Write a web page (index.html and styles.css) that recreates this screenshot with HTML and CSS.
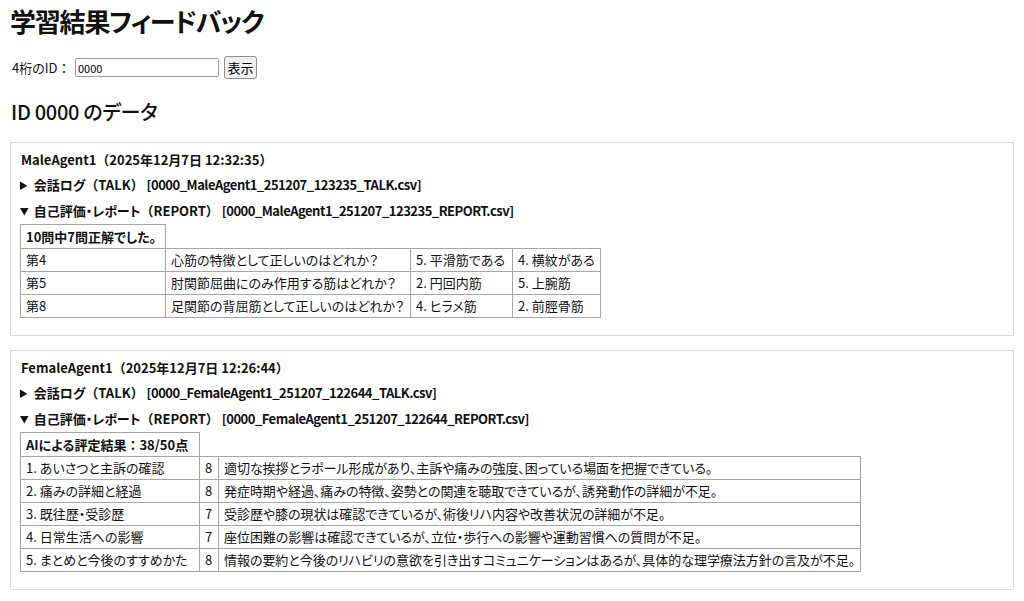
FILE: index.html
```html
<!DOCTYPE html>
<html lang="ja">
<head>
<meta charset="utf-8">
<title>学習結果フィードバック</title>
<link rel="stylesheet" href="styles.css">
</head>
<body>
<h1 class="title">学習結果フィードバック</h1>
<div class="form-row">
  <label class="id-label" for="id">4桁のID<span class="wide">：</span></label>
  <input class="id-input" id="id" type="text" value="0000">
  <button class="show-btn" type="button">表示</button>
</div>
<h2 class="data-title">ID 0000 のデータ</h2>

<section class="card">
  <div class="agent">MaleAgent1<span class="wide">（</span>2025年12月7日 12:32:35<span class="wide">）</span></div>
  <details class="log">
    <summary>会話ログ<span class="wide">（</span>TALK<span class="wide">）</span> <span class="file">[0000_MaleAgent1_251207_123235_TALK.csv]</span></summary>
  </details>
  <details class="log" open>
    <summary>自己評価・レポート<span class="wide">（</span>REPORT<span class="wide">）</span> <span class="file">[0000_MaleAgent1_251207_123235_REPORT.csv]</span></summary>
    <table class="report quiz">
      <tr><th class="q-head">10問中7問正解でした。</th></tr>
      <tr><td class="c1">第4</td><td class="c2">心筋の特徴として正しいのはどれか？</td><td class="c3">5. 平滑筋である</td><td class="c4">4. 横紋がある</td></tr>
      <tr><td class="c1">第5</td><td class="c2">肘関節屈曲にのみ作用する筋はどれか？</td><td class="c3">2. 円回内筋</td><td class="c4">5. 上腕筋</td></tr>
      <tr><td class="c1">第8</td><td class="c2">足関節の背屈筋として正しいのはどれか？</td><td class="c3">4. ヒラメ筋</td><td class="c4">2. 前脛骨筋</td></tr>
    </table>
  </details>
</section>

<section class="card">
  <div class="agent">FemaleAgent1<span class="wide">（</span>2025年12月7日 12:26:44<span class="wide">）</span></div>
  <details class="log">
    <summary>会話ログ<span class="wide">（</span>TALK<span class="wide">）</span> <span class="file">[0000_FemaleAgent1_251207_122644_TALK.csv]</span></summary>
  </details>
  <details class="log" open>
    <summary>自己評価・レポート<span class="wide">（</span>REPORT<span class="wide">）</span> <span class="file">[0000_FemaleAgent1_251207_122644_REPORT.csv]</span></summary>
    <table class="report eval">
      <tr><th class="e-head">AIによる評定結果<span class="wide">：</span>38/50点</th></tr>
      <tr><td class="e1">1. あいさつと主訴の確認</td><td class="e2">8</td><td class="e3">適切な挨拶とラポール形成があり、主訴や痛みの強度、困っている場面を把握できている。</td></tr>
      <tr><td class="e1">2. 痛みの詳細と経過</td><td class="e2">8</td><td class="e3">発症時期や経過、痛みの特徴、姿勢との関連を聴取できているが、誘発動作の詳細が不足。</td></tr>
      <tr><td class="e1">3. 既往歴・受診歴</td><td class="e2">7</td><td class="e3">受診歴や膝の現状は確認できているが、術後リハ内容や改善状況の詳細が不足。</td></tr>
      <tr><td class="e1">4. 日常生活への影響</td><td class="e2">7</td><td class="e3">座位困難の影響は確認できているが、立位・歩行への影響や運動習慣への質問が不足。</td></tr>
      <tr><td class="e1">5. まとめと今後のすすめかた</td><td class="e2">8</td><td class="e3">情報の要約と今後のリハビリの意欲を引き出すコミュニケーションはあるが、具体的な理学療法方針の言及が不足。</td></tr>
    </table>
  </details>
</section>
</body>
</html>
```

FILE: styles.css
```css
html, body {
  background: #fff;
}
body {
  margin: 0;
  padding: 9px 10px 0;
  font-family: "Noto Sans CJK JP", "Noto Sans", sans-serif;
  font-feature-settings: "palt";
  font-size: 13px;
  line-height: 18px;
  color: #111;
}
.wide {
  font-feature-settings: normal;
}
.title {
  margin: 0;
  font-size: 26px;
  line-height: 22px;
  font-weight: bold;
  letter-spacing: -1.2px;
  padding-top: 1px;
}
.form-row {
  display: flex;
  align-items: center;
  margin-top: 24px;
  height: 23px;
}
.id-label {
  width: 65px;
  padding-left: 2px;
  box-sizing: border-box;
  white-space: nowrap;
}
.id-input {
  box-sizing: border-box;
  width: 144px;
  height: 19px;
  margin: 0;
  padding: 0 2px;
  border: 1px solid #9a9a9a;
  border-radius: 2px;
  font-family: "Noto Sans CJK JP", sans-serif;
  font-size: 11px;
  color: #000;
}
.show-btn {
  box-sizing: border-box;
  margin-left: 5px;
  width: 33px;
  height: 23px;
  padding: 0;
  border: 1px solid #8f8f8f;
  border-radius: 3px;
  background: #efeff1;
  font-family: "Noto Sans CJK JP", sans-serif;
  font-size: 13px;
  color: #000;
}
.data-title {
  margin: 21px 0 18px 1px;
  font-size: 20px;
  line-height: 24px;
  font-weight: 500;
  letter-spacing: -0.3px;
}
.card {
  border: 1px solid #dcdcdc;
  padding: 8px 9px 17px;
  margin-bottom: 14px;
}
.agent {
  font-weight: bold;
  padding-left: 1px;
}
.log {
  margin-top: 7px;
}
.log + .log {
  margin-top: 8px;
}
.log summary {
  font-weight: bold;
  cursor: pointer;
}
.file {
  letter-spacing: -0.5px;
}
.report {
  border-collapse: collapse;
  margin-top: 4px;
  white-space: nowrap;
}
.report th,
.report td {
  border: 1px solid #a6a6a6;
  padding: 2px 5px 2px 5px;
  text-align: left;
  font-weight: normal;
}
.report th {
  font-weight: bold;
  padding-top: 3px;
}
.quiz .c1 { width: 134px; }
.quiz .c2 { width: 234px; }
.quiz .c3 { width: 91px; }
.quiz .c4 { width: 76px; }
.eval .e1 { width: 168px; }
.eval .e2 { width: 8px; }
.eval .e3 {
  width: 631px;
  letter-spacing: -0.05px;
}
```
